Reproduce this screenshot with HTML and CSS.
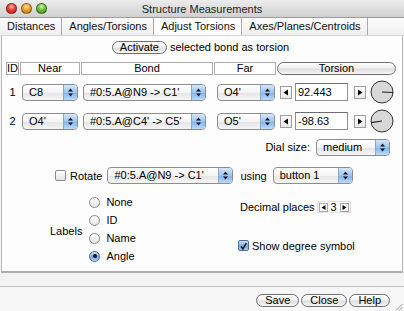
FILE: index.html
```html
<!DOCTYPE html>
<html>
<head>
<meta charset="utf-8">
<link rel="stylesheet" href="styles.css">
</head>
<body>
<div class="window">
  <div class="titlebar">
    <div class="lights">
      <span class="light red"></span>
      <span class="light orange"></span>
      <span class="light green"></span>
    </div>
    <div class="title">Structure Measurements</div>
    <div></div>
  </div>
  <div class="tabs">
    <div class="tab">Distances</div>
    <div class="tab">Angles/Torsions</div>
    <div class="tab selected">Adjust Torsions</div>
    <div class="tab">Axes/Planes/Centroids</div>
  </div>
  <div class="panel">
    <div class="activate-row">
      <span class="pill">Activate</span>
      <span>selected bond as torsion</span>
    </div>
    <div class="grid">
      <div class="head-cell">ID</div>
      <div class="head-cell">Near</div>
      <div class="head-cell">Bond</div>
      <div class="head-cell">Far</div>
      <div class="pill torsion-head">Torsion</div>

      <div class="cell id">1</div>
      <div class="cell"><div class="popup near"><span class="popup-label">C8</span><span class="popup-arrows"><svg width="7" height="11" viewBox="0 0 7 11"><path d="M3.5 1.5L6 4.5H1Z M3.5 9.5L6 6.5H1Z" fill="#111"/></svg></span></div></div>
      <div class="cell"><div class="popup bond"><span class="popup-label">#0:5.A@N9 -&gt; C1'</span><span class="popup-arrows"><svg width="7" height="11" viewBox="0 0 7 11"><path d="M3.5 1.5L6 4.5H1Z M3.5 9.5L6 6.5H1Z" fill="#111"/></svg></span></div></div>
      <div class="cell"><div class="popup far"><span class="popup-label">O4'</span><span class="popup-arrows"><svg width="7" height="11" viewBox="0 0 7 11"><path d="M3.5 1.5L6 4.5H1Z M3.5 9.5L6 6.5H1Z" fill="#111"/></svg></span></div></div>
      <div class="cell torsion">
        <span class="arrow-btn"><svg width="6" height="7" viewBox="0 0 6 7"><path d="M0.5 3.5L5 0.5V6.5Z" fill="#000"/></svg></span>
        <span class="entry">92.443</span>
        <span class="arrow-btn right"><svg width="6" height="7" viewBox="0 0 6 7"><path d="M5.5 3.5L1 0.5V6.5Z" fill="#000"/></svg></span>
        <svg class="dial" width="24" height="24" viewBox="0 0 24 24"><circle cx="12" cy="12" r="11" fill="#d8d8d8" stroke="#333" stroke-width="1"/><line x1="12" y1="12" x2="23" y2="12.5" stroke="#222" stroke-width="1.1"/></svg>
      </div>

      <div class="cell id">2</div>
      <div class="cell"><div class="popup near"><span class="popup-label">O4'</span><span class="popup-arrows"><svg width="7" height="11" viewBox="0 0 7 11"><path d="M3.5 1.5L6 4.5H1Z M3.5 9.5L6 6.5H1Z" fill="#111"/></svg></span></div></div>
      <div class="cell"><div class="popup bond"><span class="popup-label">#0:5.A@C4' -&gt; C5'</span><span class="popup-arrows"><svg width="7" height="11" viewBox="0 0 7 11"><path d="M3.5 1.5L6 4.5H1Z M3.5 9.5L6 6.5H1Z" fill="#111"/></svg></span></div></div>
      <div class="cell"><div class="popup far"><span class="popup-label">O5'</span><span class="popup-arrows"><svg width="7" height="11" viewBox="0 0 7 11"><path d="M3.5 1.5L6 4.5H1Z M3.5 9.5L6 6.5H1Z" fill="#111"/></svg></span></div></div>
      <div class="cell torsion">
        <span class="arrow-btn"><svg width="6" height="7" viewBox="0 0 6 7"><path d="M0.5 3.5L5 0.5V6.5Z" fill="#000"/></svg></span>
        <span class="entry">-98.63</span>
        <span class="arrow-btn right"><svg width="6" height="7" viewBox="0 0 6 7"><path d="M5.5 3.5L1 0.5V6.5Z" fill="#000"/></svg></span>
        <svg class="dial" width="24" height="24" viewBox="0 0 24 24"><circle cx="12" cy="12" r="11" fill="#d8d8d8" stroke="#333" stroke-width="1"/><line x1="12" y1="12" x2="1.1" y2="13.6" stroke="#222" stroke-width="1.1"/></svg>
      </div>
    </div>

    <div class="dial-row">
      <span>Dial size:</span>
      <div class="popup dialsize"><span class="popup-label">medium</span><span class="popup-arrows"><svg width="7" height="11" viewBox="0 0 7 11"><path d="M3.5 1.5L6 4.5H1Z M3.5 9.5L6 6.5H1Z" fill="#111"/></svg></span></div>
    </div>

    <div class="rotate-row">
      <span class="checkbox"></span>
      <span class="rotate-label">Rotate</span>
      <div class="popup rotbond"><span class="popup-label">#0:5.A@N9 -&gt; C1'</span><span class="popup-arrows"><svg width="7" height="11" viewBox="0 0 7 11"><path d="M3.5 1.5L6 4.5H1Z M3.5 9.5L6 6.5H1Z" fill="#111"/></svg></span></div>
      <span class="using">using</span>
      <div class="popup button1"><span class="popup-label">button 1</span><span class="popup-arrows"><svg width="7" height="11" viewBox="0 0 7 11"><path d="M3.5 1.5L6 4.5H1Z M3.5 9.5L6 6.5H1Z" fill="#111"/></svg></span></div>
    </div>

    <div class="bottom">
      <div class="labels-group">
        <span class="labels-title">Labels</span>
        <div class="radios">
          <div class="radio-row"><span class="radio"></span><span>None</span></div>
          <div class="radio-row"><span class="radio"></span><span>ID</span></div>
          <div class="radio-row"><span class="radio"></span><span>Name</span></div>
          <div class="radio-row"><span class="radio on"><span class="dot"></span></span><span>Angle</span></div>
        </div>
      </div>
      <div class="options">
        <div class="decimal-row">
          <span>Decimal places</span>
          <span class="stepper">
            <span class="mini-arrow"><svg width="5" height="5" viewBox="0 0 5 5"><path d="M0.5 2.5L4.5 0V5Z" fill="#000"/></svg></span>
            <span class="stepper-val">3</span>
            <span class="mini-arrow"><svg width="5" height="5" viewBox="0 0 5 5"><path d="M4.5 2.5L0.5 0V5Z" fill="#000"/></svg></span>
          </span>
        </div>
        <div class="degree-row">
          <span class="checkbox checked"><svg width="11" height="11" viewBox="0 0 11 11"><path d="M2.5 5.5L4.8 8.5L9 1.5" fill="none" stroke="#111" stroke-width="1.8"/></svg></span>
          <span>Show degree symbol</span>
        </div>
      </div>
    </div>
  </div>
  <div class="footer">
    <div class="footer-bar">
      <span class="pill btn">Save</span>
      <span class="pill btn">Close</span>
      <span class="pill btn">Help</span>
      <svg class="grip" width="8" height="8" viewBox="0 0 8 8"><path d="M7.5 1L1 7.5M7.5 4L4 7.5M7.5 7L7 7.5" stroke="#9a9a9a" stroke-width="1"/></svg>
    </div>
  </div>
</div>
</body>
</html>
```

FILE: styles.css
```css
* { box-sizing: border-box; }
html, body { margin: 0; padding: 0; }
body {
  width: 404px;
  height: 311px;
  overflow: hidden;
  font-family: "Liberation Sans", Arial, sans-serif;
  font-size: 11px;
  color: #000;
  background: #f3f3f3;
}
.window {
  width: 404px;
  height: 311px;
  display: flex;
  flex-direction: column;
}
.titlebar {
  flex: none;
  height: 18px;
  display: grid;
  grid-template-columns: 1fr auto 1fr;
  align-items: center;
  background: linear-gradient(#ececec, #d0d0d0);
  border-bottom: 1px solid #9c9c9c;
}
.lights { display: flex; gap: 4px; padding-left: 6px; }
.light {
  width: 11px; height: 11px; border-radius: 50%;
  border: 1px solid rgba(0,0,0,0.35);
}
.light.red { background: radial-gradient(circle at 50% 30%, #ffb0a8 0, #e3413b 45%, #b41c15 100%); }
.light.orange { background: radial-gradient(circle at 50% 30%, #ffe3a0 0, #e8a12a 45%, #b86e0c 100%); }
.light.green { background: radial-gradient(circle at 50% 30%, #d8f5b0 0, #6cbf3c 45%, #3b8b1b 100%); }
.title { color: #222; font-size: 11px; }

.tabs {
  flex: none;
  height: 18px;
  display: flex;
  background: linear-gradient(#fbfbfb, #efefef);
  border-bottom: 1px solid #d6d6d6;
}
.tab {
  padding: 0 6px 0 7px;
  line-height: 17px;
  border-right: 1px solid #a9a9a9;
  color: #111;
}
.tab.selected { background: #fdfdfd; }

.panel {
  flex: none;
  height: 237px;
  margin: 0 1px;
  background: #fdfdfd;
  border: 1px solid #b8b8b8;
  border-top: none;
  border-bottom: 2px solid #adadad;
  padding: 4px 7px 0 4px;
  display: flex;
  flex-direction: column;
}
.activate-row {
  height: 14px;
  display: flex;
  justify-content: center;
  align-items: center;
  gap: 3px;
}
.pill {
  display: inline-flex;
  align-items: center;
  justify-content: center;
  height: 13px;
  padding: 0 7px;
  border: 1px solid #6f6f6f;
  border-radius: 7px;
  background: linear-gradient(#ffffff, #f2f2f2 45%, #dedede 55%, #f7f7f7);
  line-height: 11px;
}

.grid {
  margin-top: 8px;
  display: grid;
  grid-template-columns: 13px 60px 132px 62px 119px;
  grid-template-rows: 13px 24px 24px;
  column-gap: 1px;
  row-gap: 5px;
}
.head-cell {
  border: 1px solid #acacac;
  background: #fff;
  text-align: center;
  line-height: 11px;
}
.torsion-head { height: 13px; }
.cell { display: flex; align-items: center; }
.cell.id { justify-content: center; }

.popup {
  height: 17px;
  display: flex;
  align-items: stretch;
  border: 1px solid #8d8d8d;
  border-radius: 4px;
  background: linear-gradient(#ffffff, #f4f4f4 50%, #e4e4e4 51%, #f6f6f6);
  overflow: hidden;
}
.popup-label {
  flex: 1;
  padding-left: 6px;
  line-height: 15px;
  white-space: nowrap;
  overflow: hidden;
}
.popup-arrows {
  width: 14px;
  flex: none;
  display: flex;
  align-items: center;
  justify-content: center;
  border-left: 1px solid #8aa6c8;
  background: linear-gradient(#d3e6fb, #9cc5f2 50%, #7fb2ee 51%, #bcdcfa);
}
.popup.near { margin-left: 2px; width: 56px; }
.popup.bond { margin-left: 2px; width: 123px; }
.popup.far { margin-left: 3px; width: 58px; }

.torsion { padding-left: 3px; }
.arrow-btn {
  width: 12px; height: 13px;
  display: flex; align-items: center; justify-content: center;
  border: 1px solid #9e9e9e;
  background: linear-gradient(#ffffff, #e9e9e9);
}
.entry {
  margin-left: 3px;
  width: 53px;
  height: 18px;
  border: 1px solid #8e8e8e;
  border-top-color: #6e6e6e;
  background: #fff;
  padding-left: 2px;
  line-height: 16px;
}
.arrow-btn.right { margin-left: 6px; }
.dial { margin-left: 4px; flex: none; }

.dial-row {
  margin-top: 5px;
  height: 18px;
  display: flex;
  justify-content: flex-end;
  align-items: center;
  gap: 6px;
  padding-right: 5px;
}
.popup.dialsize { width: 74px; }

.rotate-row {
  margin-top: 11px;
  height: 17px;
  display: flex;
  align-items: center;
  padding-left: 49px;
}
.checkbox {
  width: 11px; height: 11px;
  border: 1px solid #8a8a8a;
  border-radius: 2px;
  background: linear-gradient(#ffffff, #e6e6e6);
  display: inline-flex;
  flex: none;
}
.checkbox.checked {
  border-color: #4d6d96;
  background: linear-gradient(#cfe3fa, #7eb1ec 50%, #6aa3ea 51%, #a9d0fb);
}
.rotate-label { margin-left: 4px; }
.popup.rotbond { margin-left: 5px; width: 126px; }
.using { margin-left: 7px; }
.popup.button1 { margin-left: 6px; width: 80px; }

.bottom {
  margin-top: 9px;
  display: grid;
  grid-template-columns: 232px 1fr;
}
.labels-group {
  display: flex;
  align-items: center;
  padding-left: 44px;
  align-self: start;
}
.labels-title { padding-top: 4px; }
.radios { margin-left: 7px; display: flex; flex-direction: column; }
.radio-row {
  height: 18px;
  display: flex;
  align-items: center;
  gap: 6px;
}
.radio {
  width: 11px; height: 11px;
  border-radius: 50%;
  border: 1px solid #8a8a8a;
  background: linear-gradient(#ffffff, #e4e4e4);
  display: inline-flex;
  align-items: center;
  justify-content: center;
}
.radio.on {
  border-color: #4a6a94;
  background: linear-gradient(#cde2fa, #7fb2ec 50%, #64a0ea 51%, #b0d4fb);
}
.dot { width: 4px; height: 4px; border-radius: 50%; background: #111; }

.options { display: flex; flex-direction: column; padding-top: 8px; }
.decimal-row {
  height: 12px;
  display: flex;
  align-items: center;
  padding-left: 2px;
  gap: 2px;
}
.stepper {
  display: inline-flex;
  align-items: center;
  gap: 2px;
  padding: 0 1px;
  height: 12px;
  border: 1px solid #e2e2e2;
}
.mini-arrow {
  width: 9px; height: 9px;
  display: inline-flex; align-items: center; justify-content: center;
  border: 1px solid #a8a8a8;
  background: #fafafa;
}
.stepper-val { padding: 0 1px; }
.degree-row {
  margin-top: 26px;
  height: 13px;
  display: flex;
  align-items: center;
  gap: 3px;
}

.footer {
  flex: 1;
  padding-top: 13px;
  display: flex;
  flex-direction: column;
}
.footer-bar {
  flex: 1;
  border-top: 1px solid #c4c4c4;
  background: #f6f6f6;
  display: flex;
  justify-content: flex-end;
  align-items: flex-start;
  padding-top: 7px;
  padding-right: 1px;
  gap: 2px;
}
.btn { padding: 0 8px; }
.grip { margin-left: 3px; align-self: flex-end; }
```
